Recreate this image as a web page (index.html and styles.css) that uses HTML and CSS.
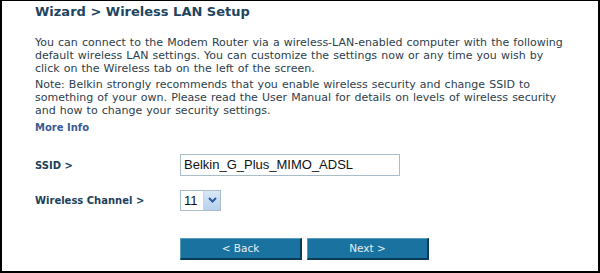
FILE: index.html
```html
<!DOCTYPE html>
<html>
<head>
<meta charset="utf-8">
<link rel="stylesheet" href="styles.css">
</head>
<body>
<div class="frame">
  <h1 class="title">Wizard &gt; Wireless LAN Setup</h1>
  <p class="text">You can connect to the Modem Router via a wireless-LAN-enabled computer with the following default wireless LAN settings. You can customize the settings now or any time you wish by click on the Wireless tab on the left of the screen.</p>
  <p class="text">Note: Belkin strongly recommends that you enable wireless security and change SSID to something of your own. Please read the User Manual for details on levels of wireless security and how to change your security settings.</p>
  <a class="more">More Info</a>
  <div class="form">
    <div class="row ssid">
      <span class="label">SSID &gt;</span>
      <div class="input">Belkin_G_Plus_MIMO_ADSL</div>
    </div>
    <div class="row chan">
      <span class="label">Wireless Channel &gt;</span>
      <div class="select"><span class="val">11</span><span class="arrow"><svg width="9" height="6" viewBox="0 0 9 6"><path d="M1 1 L4.5 4.5 L8 1" fill="none" stroke="#2a5aa0" stroke-width="2"/></svg></span></div>
    </div>
  </div>
  <div class="buttons">
    <div class="btn">&lt; Back</div>
    <div class="btn">Next &gt;</div>
  </div>
</div>
</body>
</html>
```
FILE: styles.css
```css
html, body { margin: 0; padding: 0; background: #fff; }
.frame {
  width: 600px; height: 273px; box-sizing: border-box;
  border: 2px solid #000; border-top-width: 1px;
  padding: 2px 28px 0 33px;
  font-family: "DejaVu Sans", Verdana, sans-serif;
  color: #2c3e4c;
}
.title {
  margin: 0; font-size: 13px; font-weight: bold; color: #1d4560;
  line-height: 18px;
}
.text {
  margin: 0; font-size: 11px; line-height: 13px; word-spacing: 0.6px;
}
.title + .text { margin-top: 15px; }
.text + .text { margin-top: 3px; }
.more {
  display: block; margin-top: 4px; font-size: 10px; font-weight: bold; color: #3a5a96; line-height: 13px;
}
.form { margin-top: 20px; }
.row { display: flex; align-items: center; }
.label { width: 145px; font-size: 10px; font-weight: bold; color: #1d3f5c; }
.ssid { height: 22px; }
.chan { margin-top: 13px; height: 22px; }
.input {
  width: 220px; height: 22px; box-sizing: border-box;
  border: 1px solid #a9bcc9; padding: 2px 3px;
  font-family: "Liberation Sans", Arial, sans-serif; font-size: 13px; color: #111;
  line-height: 16px;
}
.select {
  display: flex; width: 41px; height: 21px; box-sizing: border-box;
  border: 1px solid #a9bcc9; align-items: stretch;
}
.val { flex: 1; padding-left: 3px; font-family: "Liberation Sans", Arial, sans-serif; font-size: 13px; color: #111; line-height: 19px; }
.arrow {
  width: 16px; display: flex; align-items: center; justify-content: center;
  background: linear-gradient(#d9e8f7, #b6d0ec); border-left: 1px solid #c6d8ea;
}
.buttons { display: flex; gap: 5px; margin: 27px 0 0 145px; }
.btn {
  width: 122px; height: 22px; box-sizing: border-box;
  background: #19729f; color: #e8eef2;
  border: 1px solid #0d4e70; border-top-color: #5a9cbf; border-left-color: #5a9cbf;
  border-bottom: 2px solid #0a3a55; border-right: 2px solid #0a3a55;
  font-size: 10.5px; text-align: center; line-height: 19px;
}
```
